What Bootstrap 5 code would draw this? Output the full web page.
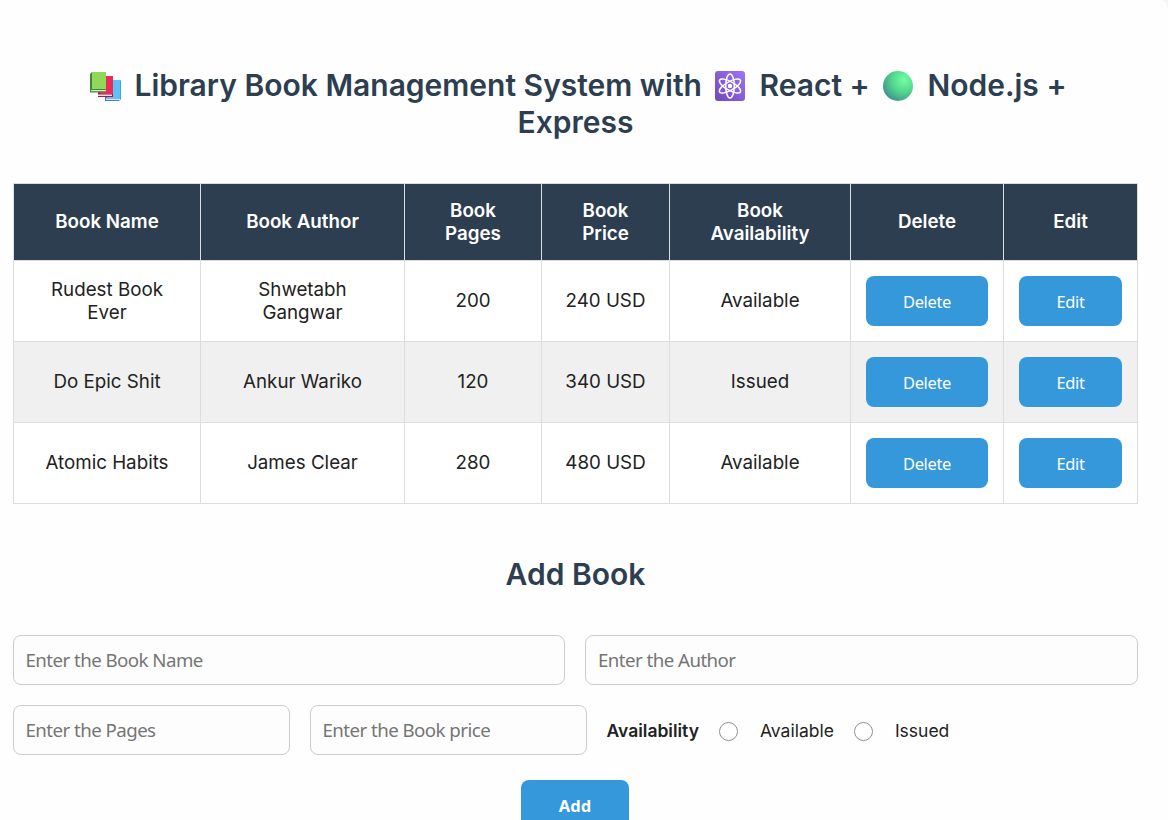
<!DOCTYPE html>
<html lang="en">
<head>
<meta charset="utf-8">
<meta name="viewport" content="width=device-width, initial-scale=1">
<title>Library Book Management System</title>
<link href="https://cdn.jsdelivr.net/npm/bootstrap@5.3.0/dist/css/bootstrap.min.css" rel="stylesheet">
<style>
html { scrollbar-width: none; }
body { background: #f4f6f8; font-family: Inter, "Liberation Sans", sans-serif; color: #222; font-size: 18.75px; line-height: 23px; overflow: hidden; height: 820px; }
.sheet { background: #fefefe; border-top-right-radius: 7px 11px; padding: 67px 30px 40px 13px; min-height: 820px; }
.title { color: #2c3e50; font-size: 30px; line-height: 37px; font-weight: 600; margin: 0; }
.title svg { width: 32px; height: 32px; vertical-align: -6px; margin: -2px 6px 0 4.5px; }
.books { margin: 42px 0 0; table-layout: fixed; border-collapse: collapse; width: 1125px; text-align: center; }
.books th, .books td { border: 1px solid #ddd; padding: 14px 15px 16px; vertical-align: middle; }
.books td:has(button) { padding: 15px; }
.books th { background: #2c3e50; color: #fff; font-weight: 600; height: 77px; padding: 15px; }
.books th:not(:has(br)) { padding: 14px 15px 16px; }
.books td { background: #fff; height: 81px; }
.books td:has(br) { padding: 15px; }
.books tr:nth-child(even) td { background: #f0f0f0; }
.btn-book { background: #3498db; color: #fff; border: 0; border-radius: 8px; height: 50px; padding: 0; font: 16.5px "Noto Sans", sans-serif; letter-spacing: -.35px; display: block; width: 100%; }
.btn-book:hover { background: #2980b9; color: #fff; }
.btn-add { width: 108px; font-weight: 700; letter-spacing: 0; margin: 25px auto 0; }
.add-title { margin-top: 52px; }
.book-form { padding-top: 10px; margin: 0 .5px 0 -.5px; }
.field { border: 1px solid #ccc; border-radius: 8px; background: #fdfdfd; height: 50px; padding: 0 12px 2px; font: 18.7px "Noto Sans", sans-serif; letter-spacing: -.55px; }
.field::placeholder { color: #757575; opacity: 1; }
.short { width: 277px; flex: none; }
.gap-20 { gap: 20px; }
.choice { font-size: 17.5px; margin-top: 20px; }
.choice input[type=radio] { appearance: none; width: 19px; height: 19px; border: 1px solid #8f8f9d; border-radius: 50%; background: #fff; margin: 3px 22px 0 20px; flex: none; }
</style>
</head>
<body>
<main class="sheet">
  <h1 class="title text-center">
    <svg viewBox="0 0 32 32" aria-hidden="true"><path fill="#3187cd" d="m16 12 3-2h12l1 1v18l-2 2H16z"/><path fill="#5bc1f7" d="M18 10h13.500v18H18z"/><path fill="#d5e5f6" d="M17 28.500h14v1.500H17z"/><path fill="#ae1745" d="m9 7 2-1h13v21H9z"/><path fill="#ed2b59" d="M11 6h13v18H11z"/><path fill="#efd7e6" d="M9 24.500h14V26H9z"/><path fill="#3c873b" d="m1 4 2-2h14v20H1z"/><path fill="#92d858" d="M3 2h14v17H3z"/><path fill="#dbe8d1" d="M2 20h15v1.500H2z"/><path fill="#3c873b" d="M1 21.500h16v1H1z"/></svg>
    Library Book Management System with
    <svg viewBox="0 0 32 32" aria-hidden="true"><defs><linearGradient id="violet" x1="0" y1="1" x2="1" y2="0"><stop stop-color="#7047bd"/><stop offset="1" stop-color="#9c75f2"/></linearGradient></defs><rect x="1" y="1" width="30" height="30" rx="3" fill="url(#violet)"/><g fill="none" stroke="#fff" stroke-width="1.500"><ellipse cx="16" cy="16" rx="4.300" ry="12"/><ellipse cx="16" cy="16" rx="4.300" ry="12" transform="rotate(60 16 16)"/><ellipse cx="16" cy="16" rx="4.300" ry="12" transform="rotate(120 16 16)"/></g><circle cx="16" cy="16" r="2.200" fill="#fff"/></svg>
    React +
    <svg viewBox="0 0 32 32" aria-hidden="true"><defs><radialGradient id="green" cx=".7" cy=".3" r=".8"><stop stop-color="#70ffa4"/><stop offset=".5" stop-color="#55d68d"/><stop offset="1" stop-color="#3b918a"/></radialGradient></defs><circle cx="16" cy="16" r="15" fill="url(#green)"/></svg>
    Node.js +<br>Express
  </h1>
  <table class="books">
    <colgroup><col style="width:187px"><col style="width:204px"><col style="width:137px"><col style="width:128px"><col style="width:181px"><col style="width:153px"><col style="width:134px"></colgroup>
    <thead><tr><th>Book Name</th><th>Book Author</th><th>Book<br>Pages</th><th>Book<br>Price</th><th>Book<br>Availability</th><th>Delete</th><th>Edit</th></tr></thead>
    <tbody>
      <tr><td>Rudest Book<br>Ever</td><td>Shwetabh<br>Gangwar</td><td>200</td><td>240 USD</td><td>Available</td><td><button class="btn btn-book">Delete</button></td><td><button class="btn btn-book">Edit</button></td></tr>
      <tr><td>Do Epic Shit</td><td>Ankur Wariko</td><td>120</td><td>340 USD</td><td>Issued</td><td><button class="btn btn-book">Delete</button></td><td><button class="btn btn-book">Edit</button></td></tr>
      <tr><td>Atomic Habits</td><td>James Clear</td><td>280</td><td>480 USD</td><td>Available</td><td><button class="btn btn-book">Delete</button></td><td><button class="btn btn-book">Edit</button></td></tr>
    </tbody>
  </table>
  <h2 class="title text-center add-title">Add Book</h2>
  <form class="book-form">
    <div class="d-flex gap-20 mt-4 pt-2">
      <input class="form-control field" placeholder="Enter the Book Name">
      <input class="form-control field" placeholder="Enter the Author">
    </div>
    <div class="d-flex gap-20 align-items-center choice">
      <input class="form-control field short" placeholder="Enter the Pages">
      <input class="form-control field short" placeholder="Enter the Book price">
      <div class="d-flex align-items-center">
        <strong class="fw-semibold">Availability</strong>
        <input type="radio" name="availability" id="available"><label for="available">Available</label>
        <input type="radio" name="availability" id="issued"><label for="issued">Issued</label>
      </div>
    </div>
    <button class="btn btn-book btn-add" type="button">Add</button>
  </form>
</main>
<script src="https://cdn.jsdelivr.net/npm/bootstrap@5.3.0/dist/js/bootstrap.bundle.min.js"></script>
</body>
</html>
